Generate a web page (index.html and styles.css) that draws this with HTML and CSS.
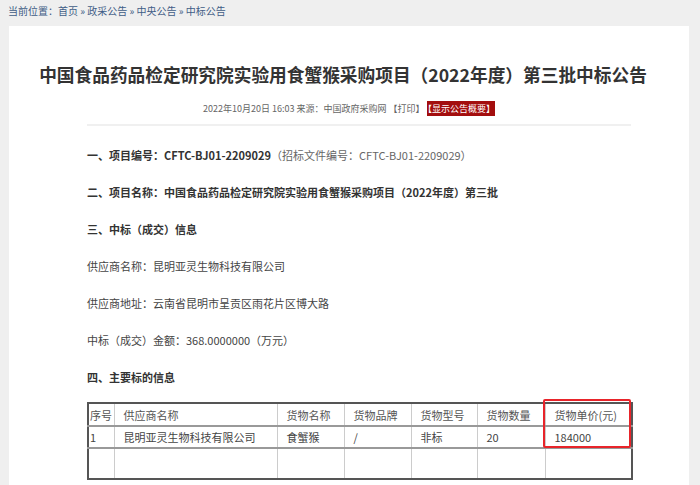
FILE: index.html
```html
<!DOCTYPE html>
<html lang="zh-CN">
<head>
    <meta charset="UTF-8">
    <title>中标公告</title>
    <link rel="stylesheet" href="styles.css">
</head>
<body>
    <div class="crumb">当前位置：<a>首页</a> » <a>政采公告</a> » <a>中央公告</a> » <a>中标公告</a></div>

    <div class="card">
        <!-- 标题 -->
        <div class="head">
            <h1>中国食品药品检定研究院实验用食蟹猴采购项目（2022年度）第三批中标公告</h1>
            <div class="meta">2022年10月20日 16:03 来源：中国政府采购网 【打印】<span class="tag">【显示公告概要】</span></div>
        </div>
        <div class="rule"></div>

        <!-- 正文 -->
        <div class="content">
            <p class="b">一、项目编号：CFTC-BJ01-2209029<span class="note">（招标文件编号：CFTC-BJ01-2209029）</span></p>
            <p class="b">二、项目名称：中国食品药品检定研究院实验用食蟹猴采购项目（2022年度）第三批</p>
            <p class="b">三、中标（成交）信息</p>
            <p>供应商名称：昆明亚灵生物科技有限公司</p>
            <p>供应商地址：云南省昆明市呈贡区雨花片区博大路</p>
            <p>中标（成交）金额：368.0000000（万元）</p>
            <p class="b">四、主要标的信息</p>

            <div class="table-wrap">
                <table>
                    <colgroup>
                        <col style="width:26px"><col style="width:163px"><col style="width:67px"><col style="width:67px"><col style="width:66px"><col style="width:68px"><col style="width:87px">
                    </colgroup>
                    <tr class="th">
                        <td class="no">序号</td><td>供应商名称</td><td>货物名称</td><td>货物品牌</td><td>货物型号</td><td>货物数量</td><td>货物单价(元)</td>
                    </tr>
                    <tr class="row">
                        <td class="no">1</td><td>昆明亚灵生物科技有限公司</td><td>食蟹猴</td><td>/</td><td>非标</td><td>20</td><td>184000</td>
                    </tr>
                    <tr class="empty">
                        <td class="no"></td><td></td><td></td><td></td><td></td><td></td><td></td>
                    </tr>
                </table>
                <div class="mark"></div>
            </div>
        </div>
    </div>
</body>
</html>
```

FILE: styles.css
```css
* {
    box-sizing: border-box;
    margin: 0;
    padding: 0;
}

body {
    font-family: "Noto Sans CJK SC", sans-serif;
    background: #efefef;
    color: #333;
    height: 485px;
    overflow: hidden;
}

.crumb {
    height: 26px;
    padding: 3px 0 0 8px;
    font-size: 10px;
    line-height: 16px;
    color: #3f5d86;
}

.crumb a {
    color: #3f5d86;
}

.card {
    width: 680px;
    margin-left: 9px;
    background: #fff;
    height: 459px;
    padding-top: 36px;
}

.head {
    text-align: center;
}

h1 {
    font-size: 17.7px;
    line-height: 24px;
    font-weight: 700;
    color: #333;
    padding-right: 12px;
}

.meta {
    margin-top: 16px;
    font-size: 9px;
    line-height: 14px;
    color: #666;
}

.tag {
    background: #a30e0e;
    color: #fff;
    padding: 1px 0;
    margin-left: 3px;
}

.rule {
    height: 2px;
    background: #f0f0f0;
    margin: 8px 58px 0 78px;
}

.content {
    padding: 18px 58px 0 78px;
}

.content p {
    font-size: 11px;
    line-height: 22px;
    margin-bottom: 15px;
    color: #444;
}

.content p.b {
    font-weight: 700;
    color: #333;
}

.note {
    font-weight: 400;
    color: #666;
}

.table-wrap {
    position: relative;
    margin-top: -1px;
}

table {
    width: 544px;
    table-layout: fixed;
    border-collapse: collapse;
    border: 2px solid #555;
    font-size: 11px;
    color: #444;
}

td {
    border-left: 1px solid #ccc;
    border-bottom: 2px solid #999;
    padding: 0 0 0 9px;
    white-space: nowrap;
    overflow: hidden;
}

td.no {
    padding-left: 1px;
}

.th td {
    height: 23px;
    color: #555;
}

.row td {
    height: 22px;
}

.empty td {
    height: 31px;
    border-bottom: 2px solid #555;
}

.mark {
    position: absolute;
    left: 456px;
    top: -3px;
    width: 88px;
    height: 49px;
    border: 2px solid #e8242a;
    border-radius: 2px;
}
```
